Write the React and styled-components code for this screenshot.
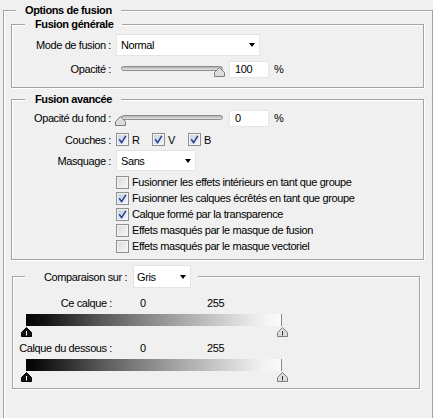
import React from "react";
import styled, { createGlobalStyle } from "styled-components";

const GlobalStyle = createGlobalStyle`
  html, body { margin: 0; padding: 0; background: #f0f0f0; }
  body {
    font-family: "Liberation Sans", Arial, sans-serif;
    font-size: 11px;
    letter-spacing: -0.4px;
    color: #000;
  }
`;

const Group = styled.fieldset`
  box-sizing: border-box;
  width: ${(p) => p.$w}px;
  margin: ${(p) => p.$mt || 0}px 0 0 ${(p) => p.$ml || 0}px;
  padding: 0 ${(p) => p.$pr || 0}px ${(p) => p.$pb || 0}px ${(p) => p.$pl || 0}px;
  border: 1px solid #a2a2a2;
  box-shadow: 1px 1px 0 #fff, inset 1px 1px 0 #fff;
  min-inline-size: 0;
`;

const Legend = styled.legend`
  margin-left: ${(p) => p.$ml || 0}px;
  padding: 0 ${(p) => p.$pr ?? 9}px 0 ${(p) => p.$pl ?? 9}px;
  background: #f0f0f0;
  font-weight: bold;
  line-height: 13px;
  height: 13px;
`;

const LegendRow = styled.legend`
  margin-left: ${(p) => p.$ml || 0}px;
  padding: 0 7px 0 19px;
  background: #f0f0f0;
  display: flex;
  align-items: center;
  gap: 6px;
  height: 23px;
`;

const Row = styled.div`
  display: flex;
  align-items: center;
  height: ${(p) => p.$h}px;
  margin-top: ${(p) => p.$mt || 0}px;
`;

const Label = styled.span`
  width: ${(p) => p.$w || 99}px;
  text-align: right;
  margin-right: ${(p) => p.$gap ?? 5}px;
  white-space: nowrap;
`;

const SelectBox = styled.div`
  box-sizing: border-box;
  display: flex;
  align-items: center;
  justify-content: space-between;
  width: ${(p) => p.$w}px;
  height: ${(p) => p.$h || 22}px;
  background: #fff;
  border: 1px solid #e4e4e4;
  padding: 0 4px 0 ${(p) => p.$pl || 4}px;
`;

const Arrow = styled.span`
  width: 0;
  height: 0;
  border-left: 3.5px solid transparent;
  border-right: 3.5px solid transparent;
  border-top: 4px solid #000;
`;

const NumBox = styled.div`
  box-sizing: border-box;
  width: 40px;
  height: 17px;
  background: #fff;
  border: 1px solid #e6e6e6;
  padding-left: 5px;
  line-height: 15px;
  margin-left: ${(p) => p.$ml}px;
`;

const Unit = styled.span`
  margin-left: 5px;
`;

const SliderWrap = styled.div`
  position: relative;
  width: 112px;
  height: 18px;
`;

const Track = styled.div`
  box-sizing: border-box;
  margin: 6px 0 0 5px;
  width: 102px;
  height: 5px;
  border: 1px solid #8d8d8d;
  border-radius: 3px;
  background: linear-gradient(#b0b0b0, #e6e6e6);
`;

const ThumbBox = styled.svg`
  position: absolute;
  top: ${(p) => p.$top}px;
  display: block;
`;

const Thumb = ({ left, top, dark, mark }) => (
  <ThumbBox $top={top} width="11" height="10" viewBox="0 0 11 10" style={{ left }}>
    <path
      d="M0.5 9.5 L0.5 5.5 L5.5 0.5 L10.5 5.5 L10.5 9.5 Z"
      fill={dark ? "#111" : "#dcdcdc"}
      stroke={dark ? "#000" : "#7d7d7d"}
    />
    {mark && <line x1="5.5" y1="4" x2="5.5" y2="8.5" stroke={dark ? "#fff" : "#333"} strokeWidth="1" />}
  </ThumbBox>
);

const Slider = ({ value }) => (
  <SliderWrap>
    <Track />
    <Thumb left={4 + (value / 100) * 99 - 5.5} top={7} />
  </SliderWrap>
);

const CheckBoxBox = styled.span`
  box-sizing: border-box;
  flex: none;
  width: 13px;
  height: 13px;
  border: 1px solid #8f8f8f;
  background: ${(p) =>
    p.$on
      ? "linear-gradient(135deg, #c3cfe4, #f3f6fb)"
      : "linear-gradient(135deg, #d6d6d6, #fbfbfb)"};
  box-shadow: inset 0 0 0 1px #f4f4f4;
  display: flex;
  align-items: center;
  justify-content: center;
`;

const Check = ({ on }) => (
  <CheckBoxBox $on={on}>
    {on && (
      <svg width="11" height="11" viewBox="0 0 11 11">
        <path d="M2.2 5.2 L4.6 8.6 L8.8 1.8" fill="none" stroke="#2b468f" strokeWidth="1.6" />
      </svg>
    )}
  </CheckBoxBox>
);

const CheckItem = styled.label`
  display: flex;
  align-items: center;
  gap: 3px;
  width: ${(p) => (p.$w ? `${p.$w}px` : "auto")};
  height: ${(p) => p.$h || 16}px;
  white-space: nowrap;
`;

const CheckList = styled.div`
  display: flex;
  flex-direction: column;
  margin: 3px 0 0 104px;
`;

const ScaleHead = styled.div`
  display: grid;
  grid-template-columns: 99px 28px 67px auto;
  height: 14px;
  line-height: 14px;
  margin-top: ${(p) => p.$mt}px;
`;

const ScaleLabel = styled.span`
  text-align: right;
  white-space: nowrap;
`;

const GradientBar = styled.div`
  box-sizing: border-box;
  width: 256px;
  height: 12px;
  margin: 4px 0 0 13px;
  background: linear-gradient(to right, #000 0%, #151515 8%, #5a5a5a 30%, #9a9a9a 55%, #c9c9c9 75%, #f2f2f2 93%, #fbfbfb 100%);
  border-right: 1px solid #8a8a8a;
`;

const ThumbRow = styled.div`
  position: relative;
  width: 256px;
  height: 10px;
  margin-left: 13px;
`;

const Scale = ({ label, mt }) => (
  <>
    <ScaleHead $mt={mt}>
      <ScaleLabel>{label}</ScaleLabel>
      <span />
      <span>0</span>
      <span>255</span>
    </ScaleHead>
    <GradientBar />
    <ThumbRow>
      <Thumb left={-5} top={1} dark mark />
      <Thumb left={251} top={1} mark />
    </ThumbRow>
  </>
);

export default function App() {
  return (
    <>
      <GlobalStyle />
      <Group $w={430} $ml={3} $mt={4} $pl={7} $pr={8} $pb={40}>
        <Legend $ml={5}>Options de fusion</Legend>

        <Group $w={413} $mt={1} $pb={9}>
          <Legend $ml={13} $pl={10}>Fusion générale</Legend>
          <Row $h={22} $mt={3}>
            <Label>Mode de fusion :</Label>
            <SelectBox $w={144}>
              Normal
              <Arrow />
            </SelectBox>
          </Row>
          <Row $h={18} $mt={4}>
            <Label>Opacité :</Label>
            <Slider value={100} />
            <NumBox $ml={1}>100</NumBox>
            <Unit>%</Unit>
          </Row>
        </Group>

        <Group $w={413} $mt={5} $pb={5}>
          <Legend $ml={13} $pl={10}>Fusion avancée</Legend>
          <Row $h={18} $mt={3}>
            <Label>Opacité du fond :</Label>
            <Slider value={0} />
            <NumBox $ml={1}>0</NumBox>
            <Unit>%</Unit>
          </Row>
          <Row $h={17} $mt={4}>
            <Label>Couches :</Label>
            <CheckItem $w={36} $h={17}><Check on />R</CheckItem>
            <CheckItem $w={36} $h={17}><Check on />V</CheckItem>
            <CheckItem $h={17}><Check on />B</CheckItem>
          </Row>
          <Row $h={21} $mt={2}>
            <Label>Masquage :</Label>
            <SelectBox $w={80} $h={21}>
              Sans
              <Arrow />
            </SelectBox>
          </Row>
          <CheckList>
            <CheckItem><Check />Fusionner les effets intérieurs en tant que groupe</CheckItem>
            <CheckItem><Check on />Fusionner les calques écrêtés en tant que groupe</CheckItem>
            <CheckItem><Check on />Calque formé par la transparence</CheckItem>
            <CheckItem><Check />Effets masqués par le masque de fusion</CheckItem>
            <CheckItem><Check />Effets masqués par le masque vectoriel</CheckItem>
          </CheckList>
        </Group>

        <Group $w={408} $ml={1} $mt={5} $pb={7}>
          <LegendRow $ml={12}>
            <span>Comparaison sur :</span>
            <SelectBox $w={58} $h={23} $pl={3}>
              Gris
              <Arrow />
            </SelectBox>
          </LegendRow>
          <Scale label="Ce calque :" mt={8} />
          <Scale label="Calque du dessous :" mt={5} />
        </Group>
      </Group>
    </>
  );
}
